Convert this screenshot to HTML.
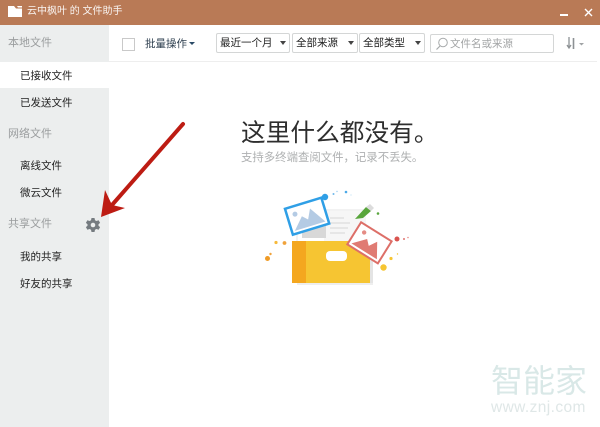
<!DOCTYPE html>
<html>
<head>
<meta charset="utf-8">
<style>
html,body{margin:0;padding:0;background:#fff;}
#r{position:relative;width:600px;height:427px;overflow:hidden;background:#fff;font-family:"Liberation Sans","Noto Sans CJK SC",sans-serif;filter:blur(.3px);}
.t{position:absolute;white-space:nowrap;line-height:14px;font-size:10.5px;}
.g{color:#9a9d9e;font-size:11px;left:8px;}
.i{color:#222;left:20px;}
.b{position:absolute;top:33px;height:20px;background:#fff;border:1px solid #d4d6d6;border-radius:2px;box-sizing:border-box;}
.b span{position:absolute;left:3px;top:2px;font-size:10.5px;line-height:14px;color:#222;white-space:nowrap;}
.b i{position:absolute;top:7px;width:0;height:0;border-left:3.5px solid transparent;border-right:3.5px solid transparent;border-top:4px solid #444;}
</style>
</head>
<body>
<div id="r">
<div style="position:absolute;left:0;top:0;width:600px;height:25px;background:#b97a56;"></div>
<svg style="position:absolute;left:8px;top:6px" width="15" height="12" viewBox="0 0 15 12"><path d="M0 0H6L8 2.5H14V11H0Z" fill="#fff"/><path d="M9 0H14V1.5H10Z" fill="#fff"/></svg>
<div class="t" style="left:27px;top:5px;color:#fff;font-size:10px;opacity:.92">云中枫叶 的 文件助手</div>
<div style="position:absolute;left:560px;top:14px;width:8px;height:2px;background:#fff;"></div>
<svg style="position:absolute;left:584px;top:8px" width="9" height="9" viewBox="0 0 9 9"><path d="M1 1L8 8M8 1L1 8" stroke="#fff" stroke-width="1.4"/></svg>

<div style="position:absolute;left:0;top:25px;width:109px;height:402px;background:#eceeee;"></div>
<div style="position:absolute;left:0;top:62px;width:109px;height:26px;background:#fff;"></div>
<div style="position:absolute;left:109px;top:61px;width:488px;height:1px;background:#eeeeee;"></div>

<div class="t g" style="top:36px">本地文件</div>
<div class="t i" style="top:69px">已接收文件</div>
<div class="t i" style="top:96px">已发送文件</div>
<div class="t g" style="top:127px">网络文件</div>
<div class="t i" style="top:159px">离线文件</div>
<div class="t i" style="top:186px">微云文件</div>
<div class="t g" style="top:217px">共享文件</div>
<div class="t i" style="top:250px">我的共享</div>
<div class="t i" style="top:277px">好友的共享</div>

<svg style="position:absolute;left:85px;top:217px" width="16" height="16" viewBox="0 0 16 16"><path d="M6.500 1H9.500L10 3.200L11.500 4L13.600 3.300L15.100 5.900L13.500 7.300V8.700L15.100 10.100L13.600 12.700L11.500 12L10 12.800L9.500 15H6.500L6 12.800L4.500 12L2.400 12.700L.9 10.100L2.500 8.700V7.300L.9 5.900L2.400 3.300L4.500 4L6 3.200Z" fill="#757b80"/><circle cx="8" cy="8" r="2.300" fill="#eceeee"/></svg>

<div style="position:absolute;left:122px;top:38px;width:11px;height:11px;border:1px solid #c9c9c9;background:#fff;"></div>
<div class="t" style="left:145px;top:37px;color:#2f4050">批量操作</div>
<div style="position:absolute;left:189px;top:42px;width:0;height:0;border-left:3px solid transparent;border-right:3px solid transparent;border-top:3px solid #2a4a66;"></div>

<div class="b" style="left:216px;width:74px"><span>最近一个月</span><i style="left:63px"></i></div>
<div class="b" style="left:292px;width:66px"><span>全部来源</span><i style="left:55px"></i></div>
<div class="b" style="left:359px;width:66px"><span>全部类型</span><i style="left:55px"></i></div>
<div style="position:absolute;left:430px;top:34px;width:124px;height:19px;border:1px solid #d4d6d6;border-radius:2px;box-sizing:border-box;background:#fff;"></div>
<svg style="position:absolute;left:435px;top:37px" width="14" height="14" viewBox="0 0 14 14"><circle cx="8" cy="5.500" r="4.300" fill="none" stroke="#a8abac" stroke-width="1"/><path d="M5 9L1.500 12.500" stroke="#a8abac" stroke-width="1.200"/></svg>
<div class="t" style="left:450px;top:37px;color:#a3a5a6">文件名或来源</div>
<svg style="position:absolute;left:566px;top:36px" width="20" height="14" viewBox="0 0 20 14"><path d="M3 1V11M1 9L3 12L5 9" fill="none" stroke="#8d9194" stroke-width="1.300"/><path d="M7.500 13V2" stroke="#8d9194" stroke-width="1.600"/><path d="M13 7H18L15.500 9.500Z" fill="#a0a3a5"/></svg>

<div class="t" style="left:241px;top:117px;font-size:24.700px;line-height:34px;color:#2e2e2e;">这里什么都没有。</div>
<div class="t" style="left:241px;top:151px;font-size:11.400px;color:#aeb0b1">支持多终端查阅文件，记录不丢失。</div>

<svg style="position:absolute;left:260px;top:180px" width="160" height="110" viewBox="0 0 160 110">
<rect x="37" y="103" width="76" height="2" fill="#eee"/>
<rect x="110" y="62" width="3" height="41" fill="#e4e4e4"/>
<rect x="37" y="30" width="68" height="32" fill="#fff" stroke="#e6e6e6"/>
<rect x="64" y="31" width="42" height="32" fill="#f6f6f6"/>
<path d="M42 35L66 30V58H42Z" fill="#d8d8d8"/>
<path d="M70 43H90M70 48H88M70 53H85M70 38H84" stroke="#dcdcdc" stroke-width="1.300"/>
<rect x="32" y="61" width="78" height="42" fill="#f6c532"/>
<rect x="32" y="61" width="14" height="42" fill="#f4a71f"/>
<rect x="66" y="71" width="21" height="10" rx="4" fill="#fff"/>
<g transform="rotate(-17 46 36)"><rect x="28" y="23" width="38" height="27" fill="#fff" stroke="#2f9fe6" stroke-width="2.500"/><circle cx="36" cy="31" r="2.500" fill="#b4cbe4"/><path d="M31 47L42 35L47 40L52 30L63 47Z" fill="#b4cbe4"/></g>
<g transform="rotate(32 110 62)"><rect x="92" y="50" width="36" height="26" fill="#fff" stroke="#dd6f68" stroke-width="2"/><circle cx="100" cy="57" r="2.200" fill="#e58c85"/><path d="M95 73L106 61L111 66L116 58L125 73Z" fill="#e07b73"/></g>
<path d="M95 39L106 27L111 31L103 38Z" fill="#59a63c"/><path d="M106 27L110 24L114 28L111 31Z" fill="#dcdcdc"/>
<circle cx="65" cy="17" r="3.200" fill="#2f9fe6"/><circle cx="73.500" cy="14" r="1" fill="#6fb8ea"/><circle cx="77" cy="11.500" r=".7" fill="#9ccdf0"/><circle cx="86" cy="12" r="1.300" fill="#4ba9e8"/><circle cx="91" cy="15" r=".5" fill="#9ccdf0"/>
<circle cx="118" cy="33.500" r="1.300" fill="#59a63c"/>
<circle cx="137" cy="59" r="2.500" fill="#d9534f"/><circle cx="144" cy="59" r="1" fill="#e0736f"/><circle cx="148" cy="57.500" r=".8" fill="#e88c88"/>
<circle cx="131" cy="78.500" r="1.600" fill="#f6c532"/><circle cx="137.500" cy="74" r=".7" fill="#f6c532"/><circle cx="123.500" cy="87.500" r="3.200" fill="#f6c532"/>
<circle cx="16" cy="62.500" r="1.600" fill="#f6b93a"/><circle cx="24.500" cy="63" r="1.900" fill="#f0a23a"/><circle cx="10.500" cy="74" r="1.200" fill="#f0a23a"/><circle cx="7.500" cy="78.500" r="2.500" fill="#ef9b26"/>
</svg>

<svg style="position:absolute;left:90px;top:115px" width="100" height="110" viewBox="0 0 100 110">
<path d="M93 9L22 90" stroke="#bd1c13" stroke-width="4" stroke-linecap="round"/>
<path d="M15 75L11 102L35 93L22 90Z" fill="#bd1c13"/>
</svg>

<div class="t" style="left:491px;top:363px;font-size:32px;line-height:36px;color:#d9e8e7;">智能家</div>
<div class="t" style="left:491px;top:400px;font-size:15.500px;line-height:16px;color:#dfe7e7;letter-spacing:.4px">www.znj.com</div>
</div>
</body>
</html>
